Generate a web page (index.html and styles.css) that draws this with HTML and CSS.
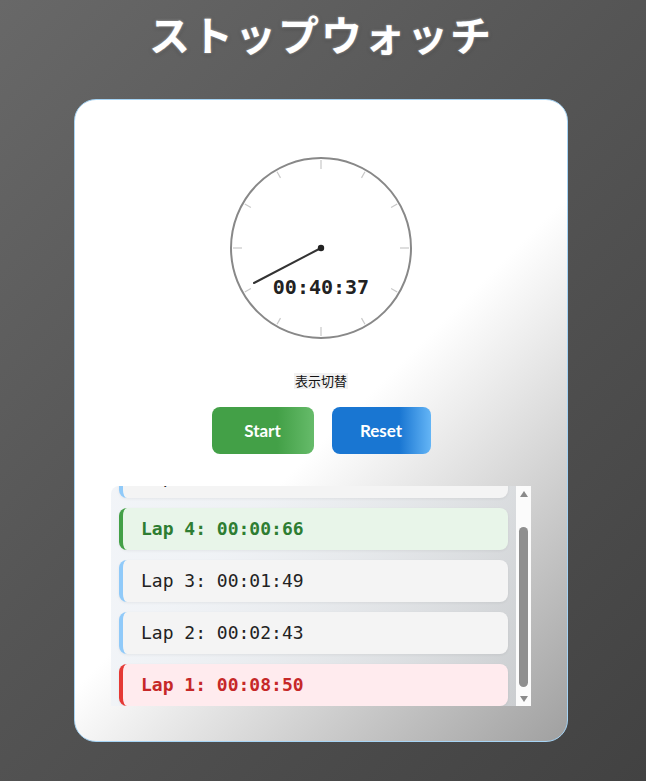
FILE: index.html
```html
<!DOCTYPE html>
<html lang="ja">
<head>
<meta charset="utf-8">
<title>ストップウォッチ</title>
<link rel="stylesheet" href="styles.css">
</head>
<body>
<div class="page">
  <h1 class="title">ストップウォッチ</h1>
  <main class="card">
    <div class="clock">
      <svg class="clock-face" width="200" height="200" viewBox="0 0 200 200">
        <circle cx="100" cy="100" r="90" fill="#fff" stroke="#888" stroke-width="2"/>
        <g stroke="#c8c8c8" stroke-width="1.2">
          <line x1="100" y1="12" x2="100" y2="21"/>
          <line x1="144" y1="23.8" x2="140.5" y2="29.9"/>
          <line x1="176.2" y1="56" x2="170.1" y2="59.5"/>
          <line x1="188" y1="100" x2="179" y2="100"/>
          <line x1="176.2" y1="144" x2="170.1" y2="140.5"/>
          <line x1="144" y1="176.2" x2="140.5" y2="170.1"/>
          <line x1="100" y1="188" x2="100" y2="179"/>
          <line x1="56" y1="176.2" x2="59.5" y2="170.1"/>
          <line x1="23.8" y1="144" x2="29.9" y2="140.5"/>
          <line x1="12" y1="100" x2="21" y2="100"/>
          <line x1="23.8" y1="56" x2="29.9" y2="59.5"/>
          <line x1="56" y1="23.8" x2="59.5" y2="29.9"/>
        </g>
        <line x1="100" y1="100" x2="33" y2="135" stroke="#333" stroke-width="2" stroke-linecap="round"/>
        <circle cx="100" cy="100" r="3.2" fill="#222"/>
        <text x="100" y="146" class="clock-digits" text-anchor="middle">00:40:37</text>
      </svg>
    </div>
    <button class="toggle" type="button">表示切替</button>
    <div class="controls">
      <button class="btn btn-start" type="button">Start</button>
      <button class="btn btn-reset" type="button">Reset</button>
    </div>
    <div class="lap-panel">
      <ul class="laps">
        <li class="lap lap-slow">Lap 1: 00:08:50</li>
        <li class="lap">Lap 2: 00:02:43</li>
        <li class="lap">Lap 3: 00:01:49</li>
        <li class="lap lap-fast">Lap 4: 00:00:66</li>
        <li class="lap">Lap 5: 00:01:12</li>
      </ul>
      <div class="scrollbar" aria-hidden="true">
        <div class="sb-btn"><span class="arrow-up"></span></div>
        <div class="sb-track"><div class="sb-thumb"></div></div>
        <div class="sb-btn"><span class="arrow-down"></span></div>
      </div>
    </div>
  </main>
</div>
</body>
</html>
```
FILE: styles.css
```css
html, body {
  margin: 0;
  padding: 0;
  height: 100%;
}
body {
  background: linear-gradient(135deg, #686868 0%, #555 45%, #424242 100%);
  font-family: "Noto Sans", "Noto Sans CJK JP", sans-serif;
  overflow: hidden;
}
.page {
  display: flex;
  flex-direction: column;
  align-items: center;
  padding-right: 4px;
}
.title {
  margin: 3px 0 36px;
  font-family: "Noto Sans CJK JP", sans-serif;
  font-size: 41px;
  line-height: 60px;
  font-weight: 700;
  letter-spacing: 2px;
  color: #fff;
  text-shadow: 0 0 3px rgba(255, 255, 255, 0.55), 0 1px 4px rgba(0, 0, 0, 0.35);
}
.card {
  box-sizing: border-box;
  width: 494px;
  height: 643px;
  padding: 36px;
  border: 1px solid #a6d4f5;
  border-radius: 22px;
  background: linear-gradient(135deg, #ffffff 0%, #ffffff 52%, #a0a0a0 100%);
  display: flex;
  flex-direction: column;
  align-items: center;
}
.clock {
  margin-top: 12px;
  height: 200px;
}
.clock-face {
  display: block;
}
.clock-digits {
  font-family: "DejaVu Sans Mono", monospace;
  font-size: 20px;
  font-weight: 700;
  fill: #222;
}
.toggle {
  margin-top: 25px;
  padding: 0 1px;
  border: none;
  background: #f2f2f2;
  font-family: "Noto Sans CJK JP", sans-serif;
  font-size: 13px;
  line-height: 16px;
  color: #111;
}
.controls {
  display: flex;
  gap: 18px;
  margin-top: 18px;
}
.btn {
  height: 47px;
  border: none;
  border-radius: 8px;
  font-family: Lato, "Open Sans", sans-serif;
  font-weight: 700;
  font-size: 17px;
  color: #fff;
}
.btn-start {
  width: 102px;
  background: linear-gradient(90deg, #43a047 0%, #43a047 64%, #66bb6a 100%);
}
.btn-reset {
  width: 99px;
  background: linear-gradient(90deg, #1976d2 0%, #1976d2 68%, #64b5f6 100%);
}
.lap-panel {
  display: flex;
  margin-top: 32px;
  width: 420px;
  height: 220px;
  border-radius: 8px 0 0 0;
  background: linear-gradient(90deg, rgba(240, 243, 247, 0.9), rgba(220, 224, 228, 0.6));
}
.laps {
  box-sizing: border-box;
  flex: 1;
  list-style: none;
  margin: 0;
  padding: 8px 8px 0;
  overflow: hidden;
  display: flex;
  flex-direction: column-reverse;
  gap: 10px;
}
.lap {
  flex: 0 0 auto;
  box-sizing: border-box;
  height: 42px;
  padding: 10px 18px;
  border-left: 4px solid #90caf9;
  border-radius: 8px;
  background: #f4f4f4;
  font-family: "DejaVu Sans Mono", monospace;
  font-size: 18px;
  line-height: 22px;
  color: #222;
  box-shadow: 0 1px 3px rgba(0, 0, 0, 0.06);
}
.lap-fast {
  background: #e8f5e9;
  border-left-color: #43a047;
  color: #2e7d32;
  font-weight: 700;
}
.lap-slow {
  background: #ffebee;
  border-left-color: #e53935;
  color: #c62828;
  font-weight: 700;
}
.scrollbar {
  width: 15px;
  flex: 0 0 15px;
  background: #fbfbfb;
  display: flex;
  flex-direction: column;
}
.sb-btn {
  height: 14px;
  display: flex;
  align-items: center;
  justify-content: center;
}
.arrow-up {
  width: 0;
  height: 0;
  border-left: 4.5px solid transparent;
  border-right: 4.5px solid transparent;
  border-bottom: 6px solid #8a8a8a;
  margin-top: 1px;
}
.arrow-down {
  width: 0;
  height: 0;
  border-left: 4.5px solid transparent;
  border-right: 4.5px solid transparent;
  border-top: 6px solid #8a8a8a;
  margin-bottom: 1px;
}
.sb-track {
  flex: 1;
  display: flex;
  align-items: flex-end;
  padding: 0 3px 5px;
}
.sb-thumb {
  width: 9px;
  height: 160px;
  border-radius: 5px;
  background: #8f8f8f;
}
```
